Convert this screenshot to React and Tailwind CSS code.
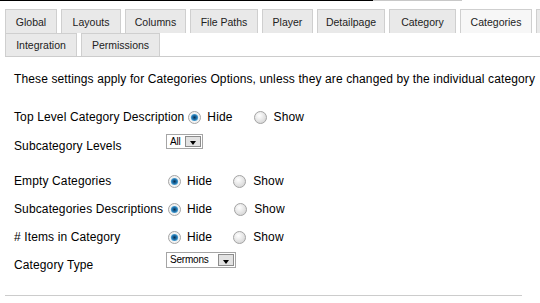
import React from 'react';

const row1 = [
  { label: 'Global', w: 'w-[52px]' },
  { label: 'Layouts', w: 'w-[60px]' },
  { label: 'Columns', w: 'w-[61px]' },
  { label: 'File Paths', w: 'w-[68px]' },
  { label: 'Player', w: 'w-[51px]' },
  { label: 'Detailpage', w: 'w-[68px]' },
  { label: 'Category', w: 'w-[67px]' },
  { label: 'Categories', w: 'w-[72px]', active: true },
  { label: '', w: 'w-[60px]', key: 'more' },
];

const row2 = [
  { label: 'Integration', w: 'w-[72px]' },
  { label: 'Permissions', w: 'w-[79px]' },
];

function Tab({ t, h }) {
  return (
    <div
      className={`${t.w} ${h} shrink-0 flex items-center justify-center border border-b-0 border-[#cfcfcf] text-[10.5px] tracking-normal text-[#222] ${
        t.active ? 'bg-[#f7f7f7]' : 'bg-[#e9e9e9]'
      }`}
    >
      {t.label}
    </div>
  );
}

function Radio({ checked }) {
  return (
    <svg width="13" height="13" viewBox="0 0 13 13" className="shrink-0">
      <defs>
        <radialGradient id="rg-off" cx="40%" cy="35%" r="70%">
          <stop offset="0" stopColor="#ffffff" />
          <stop offset="1" stopColor="#d4d4d4" />
        </radialGradient>
        <radialGradient id="rg-on" cx="50%" cy="50%" r="55%">
          <stop offset="0" stopColor="#0b2f4d" />
          <stop offset="0.5" stopColor="#1c6aa3" />
          <stop offset="1" stopColor="#58b4e6" />
        </radialGradient>
      </defs>
      <circle cx="6.5" cy="6.5" r="6" fill={checked ? '#f2f2f2' : 'url(#rg-off)'} stroke="#a4a4a4" />
      {checked && <circle cx="6.5" cy="6.5" r="3.6" fill="url(#rg-on)" />}
    </svg>
  );
}

function RadioRow({ label, wideGap }) {
  return (
    <div className="flex items-center h-[28px]">
      <span className="min-w-[150px] mr-[4px] whitespace-nowrap">{label}</span>
      <Radio checked />
      <span className="ml-[6px]">Hide</span>
      <span className={wideGap ? 'ml-[22px]' : 'ml-[21px]'}>
        <Radio />
      </span>
      <span className="ml-[7px]">Show</span>
    </div>
  );
}

function Select({ value, w, h }) {
  return (
    <div className={`${w} ${h} flex items-stretch border border-[#a5a5a5] bg-white`}>
      <span className="flex-1 pl-[3px] text-[10px] leading-[13px] text-black tracking-[-0.2px]">{value}</span>
      <span className="w-[16px] m-[1px] flex justify-center items-center pt-[3px] border border-[#8c8c8c] bg-[#e2e2e2]">
        <span className="w-0 h-0 border-l-[3.5px] border-r-[3.5px] border-t-[4px] border-l-transparent border-r-transparent border-t-black" />
      </span>
    </div>
  );
}

export default function App() {
  return (
    <div className="w-[540px] h-[303px] overflow-hidden bg-white text-black text-[12px] leading-[14px] tracking-[0.12px] font-['Liberation_Sans',Arial,sans-serif]">
      <div className="flex h-[1px]">
        <div className="w-[373px] bg-black" />
        <div className="w-[89px] bg-[#c8c8c8]" />
      </div>

      <div className="mt-[8px] ml-[5px] flex gap-[4px] overflow-hidden">
        {row1.map((t) => (
          <Tab key={t.key || t.label} t={t} h="h-[24px]" />
        ))}
      </div>
      <div className="ml-[5px] flex gap-[4px] border-b border-[#cccccc]">
        {row2.map((t) => (
          <Tab key={t.label} t={t} h="h-[23px]" />
        ))}
      </div>

      <div className="pl-[14px]">
        <p className="mt-[15px] whitespace-nowrap">
          These settings apply for Categories Options, unless they are changed by the individual category
        </p>

        <div className="mt-[17px]">
          <RadioRow label="Top Level Category Description" />
        </div>

        <div className="flex h-[36px]">
          <span className="min-w-[150px] mt-[8px]">Subcategory Levels</span>
          <div className="ml-[2px] mt-[3px]">
            <Select value="All" w="w-[37px]" h="h-[15px]" />
          </div>
        </div>

        <RadioRow label="Empty Categories" />
        <RadioRow label="Subcategories Descriptions" wideGap />
        <RadioRow label="# Items in Category" />

        <div className="flex h-[21px]">
          <span className="min-w-[150px] mt-[7px]">Category Type</span>
          <div className="ml-[2px] mt-[1px]">
            <Select value="Sermons" w="w-[70px]" h="h-[16px]" />
          </div>
        </div>
      </div>

      <div className="mt-[23px] ml-[5px] w-[517px] border-t border-[#cccccc]" />
    </div>
  );
}
